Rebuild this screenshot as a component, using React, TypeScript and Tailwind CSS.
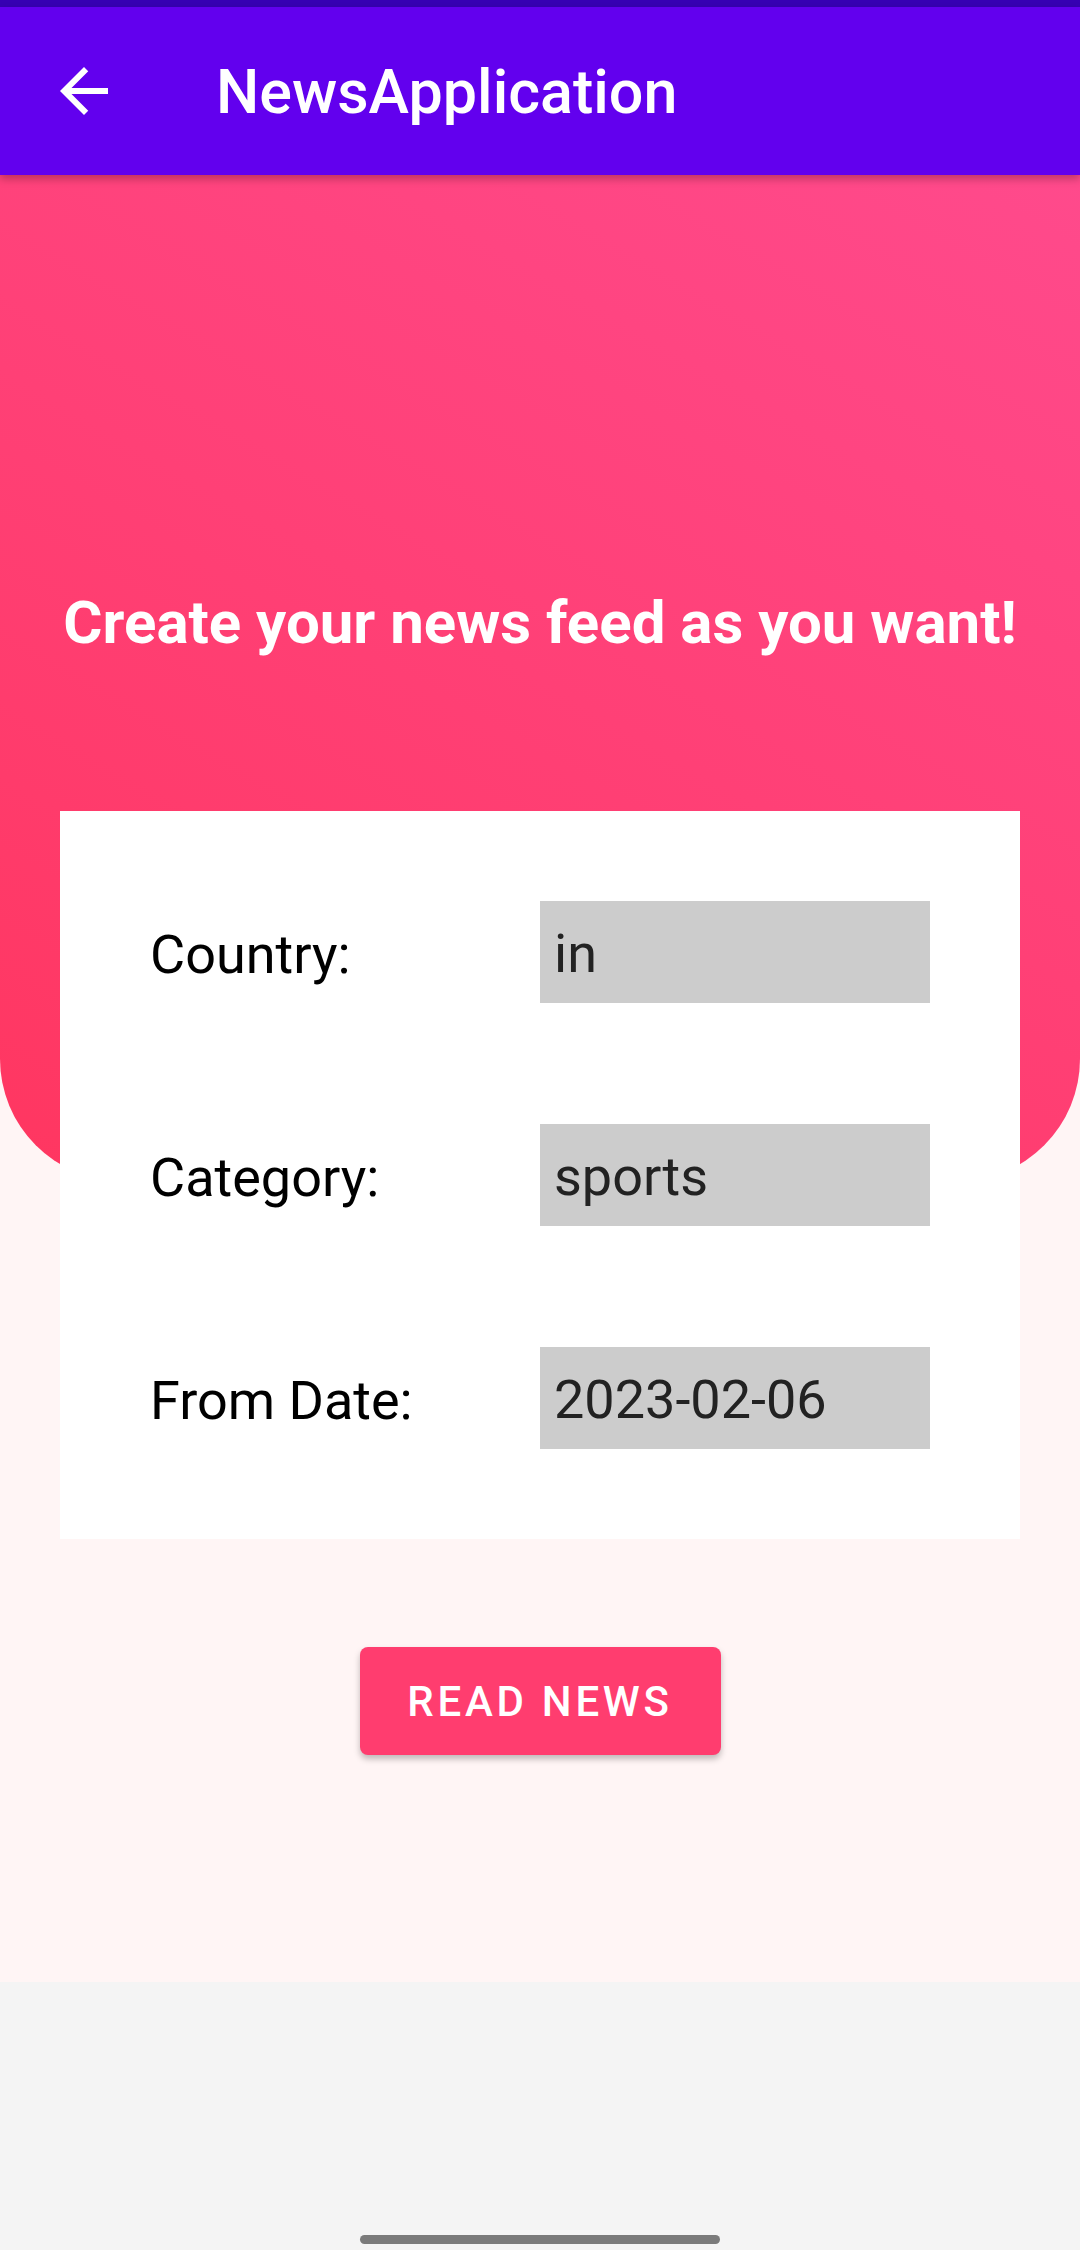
export default function App() {
  const rows = [
    { label: "Country:", value: "in" },
    { label: "Category:", value: "sports" },
    { label: "From Date:", value: "2023-02-06" },
  ];

  return (
    <div className="w-[1080px] h-[2250px] flex flex-col bg-[#f4f4f4] font-['Roboto',sans-serif]">
      {/* status bar strip */}
      <div className="h-[7px] bg-[#3700b3]" />

      {/* toolbar */}
      <header className="relative z-10 h-[168px] flex items-center pl-[48px] bg-[#6200ee] shadow-[0_4px_8px_rgba(0,0,0,0.25)]">
        <svg className="w-[72px] h-[72px] text-white" viewBox="0 0 24 24" fill="currentColor">
          <path d="M20 11H7.83l5.59-5.59L12 4l-8 8 8 8 1.41-1.41L7.83 13H20v-2z" />
        </svg>
        <h1 className="ml-[96px] pt-[2px] text-[61px] leading-[70px] font-medium text-white">
          NewsApplication
        </h1>
      </header>

      <main className="h-[1807px] flex flex-col bg-[#fff5f5]">
        <section className="h-[1006px] rounded-b-[122px] bg-linear-[30deg] from-[#ff3660] to-[#ff4a8c] pt-[413px]">
          <h2 className="text-center text-[60px] leading-[70px] font-bold text-white">
            Create your news feed as you want!
          </h2>
        </section>

        <div className="relative mx-[60px] -mt-[370px] h-[728px] bg-white p-[90px] flex flex-col gap-[121px]">
          {rows.map((r) => (
            <div key={r.label} className="flex items-center justify-between h-[102px]">
              <span className="pt-[5px] text-[54px] leading-[64px] text-black">{r.label}</span>
              <div className="w-[390px] h-[102px] bg-[#cccccc] flex items-center pl-[14px]">
                <span className="pt-[3px] text-[54px] leading-[64px] text-[#222222]">{r.value}</span>
              </div>
            </div>
          ))}
        </div>

        <div className="flex justify-center mt-[108px]">
          <button className="w-[361px] h-[108px] rounded-[8px] bg-[#ff3d6f] text-white text-[42px] font-medium tracking-[3.75px] shadow-[0_4px_6px_rgba(0,0,0,0.25)]">
            READ NEWS
          </button>
        </div>
      </main>

      {/* nav area */}
      <div className="flex-1 flex items-end justify-center pb-[6px]">
        <div className="w-[360px] h-[9px] rounded-full bg-[#7b7b7b]" />
      </div>
    </div>
  );
}
